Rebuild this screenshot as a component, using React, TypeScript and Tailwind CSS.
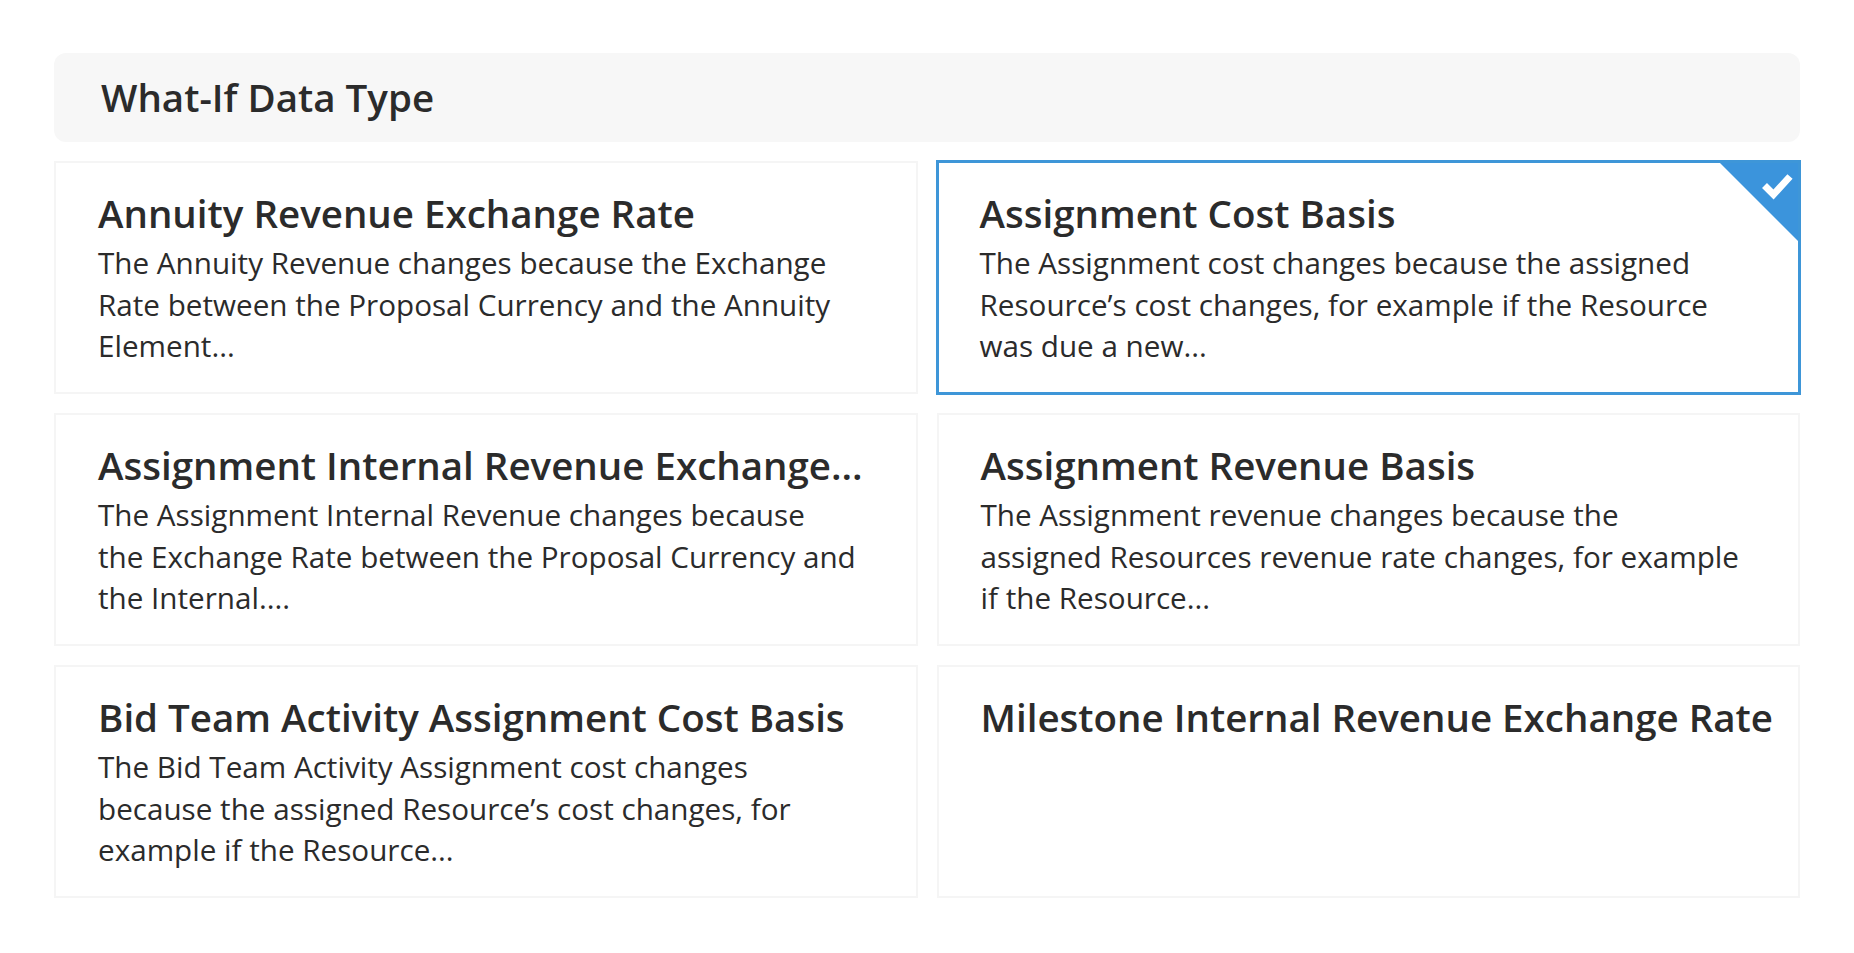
const cards = [
  { t: "Annuity Revenue Exchange Rate", d: ["The Annuity Revenue changes because the Exchange", "Rate between the Proposal Currency and the Annuity", "Element..."] },
  { t: "Assignment Cost Basis", d: ["The Assignment cost changes because the assigned", "Resource’s cost changes, for example if the Resource", "was due a new..."], sel: true },
  { t: "Assignment Internal Revenue Exchange...", d: ["The Assignment Internal Revenue changes because", "the Exchange Rate between the Proposal Currency and", "the Internal...."] },
  { t: "Assignment Revenue Basis", d: ["The Assignment revenue changes because the", "assigned Resources revenue rate changes, for example", "if the Resource..."] },
  { t: "Bid Team Activity Assignment Cost Basis", d: ["The Bid Team Activity Assignment cost changes", "because the assigned Resource’s cost changes, for", "example if the Resource..."] },
  { t: "Milestone Internal Revenue Exchange Rate", d: [] as string[] },
];

export default function App() {
  return (
    <div className="min-h-[953px] bg-white px-[54px] pt-[53px] font-['Open_Sans',sans-serif] text-[#2b2b2b]">
      <div className="flex h-[89px] items-center rounded-[12px] bg-[#f7f7f7] px-[47px] text-[38.5px] font-semibold">What-If Data Type</div>
      <div className="mt-[19px] grid grid-cols-2 gap-x-[19px] gap-y-[19px]">
        {cards.map((c) => (
          <div key={c.t} className={`relative h-[233px] overflow-hidden pt-[24px] ${c.sel ? "-m-px h-[235px] border-[3px] border-[#3e96d8] pl-[41px]" : "border-2 border-[#f5f5f5] pl-[42px]"}`}>
            <div className="whitespace-nowrap text-[38.5px] font-semibold leading-[52px]">{c.t}</div>
            <div className="mt-[3px] text-[29.65px] leading-[41.5px]">
              {c.d.map((l) => <div key={l} className="whitespace-nowrap">{l}</div>)}
            </div>
            {c.sel && (
              <svg className="absolute right-0 top-0" width="78" height="78" viewBox="0 0 78 78">
                <polygon points="0,0 78,0 78,78" fill="#3b94dc" />
                <path d="M44.5 22.5 L53.5 31.5 L70 13.5" fill="none" stroke="#fff" strokeWidth="7" />
              </svg>
            )}
          </div>
        ))}
      </div>
    </div>
  );
}
